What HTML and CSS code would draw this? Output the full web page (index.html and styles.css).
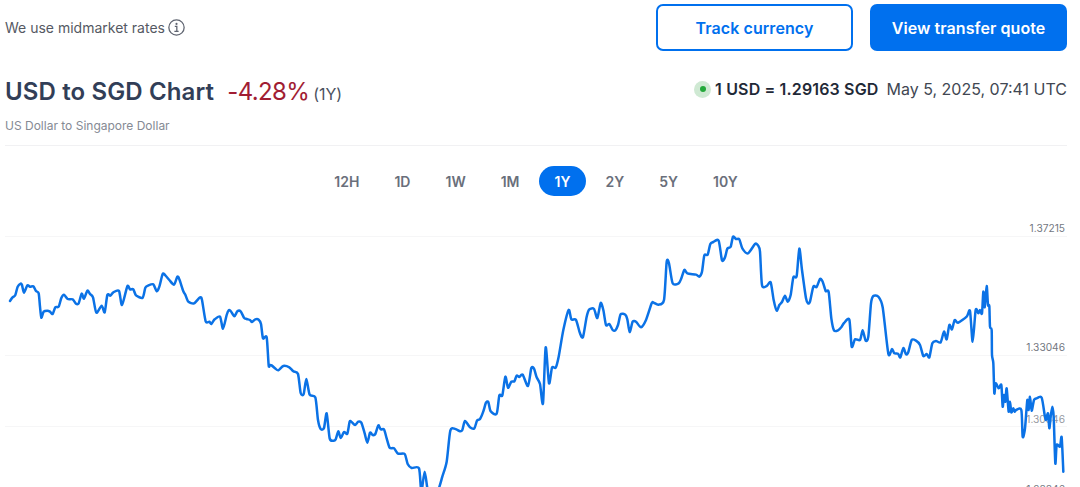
FILE: index.html
```html
<!DOCTYPE html>
<html lang="en">
<head>
<meta charset="utf-8">
<title>USD to SGD Chart</title>
<link rel="stylesheet" href="styles.css">
</head>
<body>
<main class="page">
  <div class="top">
    <div class="rates-note">
      <span>We use midmarket rates</span>
      <svg class="info" viewBox="0 0 16 16" width="17" height="17" aria-hidden="true">
        <circle cx="8" cy="8" r="7.2" fill="none" stroke="#5f6470" stroke-width="1.2"/>
        <path d="M6.4 6.9h1.9v4.6M6 11.6h4" fill="none" stroke="#5f6470" stroke-width="1.2"/>
        <circle cx="8" cy="4.6" r="1" fill="#5f6470"/>
      </svg>
    </div>
    <div class="actions">
      <a class="btn btn-outline">Track currency</a>
      <a class="btn btn-solid">View transfer quote</a>
    </div>
  </div>
  <header class="head">
    <div class="title-block">
      <div class="title-row">
        <h1>USD to SGD Chart</h1>
        <span class="change">-4.28%</span>
        <span class="period">(1Y)</span>
      </div>
      <p class="sub">US Dollar to Singapore Dollar</p>
    </div>
    <div class="rate">
      <span class="dot"></span>
      <strong>1 USD = 1.29163 SGD</strong>
      <span class="date">May 5, 2025, 07:41 UTC</span>
    </div>
  </header>
  <nav class="tabs">
    <a class="tab">12H</a>
    <a class="tab">1D</a>
    <a class="tab">1W</a>
    <a class="tab">1M</a>
    <a class="tab active">1Y</a>
    <a class="tab">2Y</a>
    <a class="tab">5Y</a>
    <a class="tab">10Y</a>
  </nav>
  <svg class="chart" viewBox="0 207 1080 290" width="1080" height="290" aria-label="USD to SGD chart">
    <g class="grid">
      <line x1="5" x2="1067" y1="236.5" y2="236.5"/>
      <line x1="5" x2="1067" y1="355.5" y2="355.5"/>
      <line x1="5" x2="1067" y1="426.5" y2="426.5"/>
    </g>
    <g class="axis">
      <text x="1065" y="231.5">1.37215</text>
      <text x="1065" y="350.5">1.33046</text>
      <text class="faded" x="1065" y="422.5">1.30846</text>
      <text x="1065" y="492.5">1.28846</text>
    </g>
    <path id="series" class="series" d=""/>
  </svg>
</main>
<script src="chart.js"></script>
</body>
</html>
```

FILE: styles.css
```css
* { box-sizing: border-box; }
html, body { margin: 0; height: 100%; overflow: hidden; background: #fff; }
body { font-family: Inter, "Liberation Sans", sans-serif; color: #2e3a52; }
.page { width: 1080px; height: 487px; overflow: hidden; }

.top { display: flex; justify-content: space-between; align-items: center; height: 47px; margin-top: 4px; padding: 0 13px 0 5px; }
.rates-note { display: flex; align-items: center; gap: 3.5px; font-size: 14px; color: #555963; margin-top: -1px; }
.info { display: block; margin-top: 1px; }
.actions { display: flex; gap: 17px; }
.btn { display: flex; align-items: center; justify-content: center; width: 197px; height: 47px; border-radius: 7px; font-size: 16px; font-weight: 600; letter-spacing: .07px; }
.btn-outline { border: 2px solid #0070ee; color: #0070ee; background: #fff; }
.btn-solid { background: #0070ee; color: #fff; }

.head { display: flex; justify-content: space-between; margin: 0 13px 0 5px; height: 95px; padding-top: 25px; border-bottom: 1px solid #f1f1f3; }
.title-row { display: flex; align-items: baseline; height: 32px; }
h1 { margin: 0; font-size: 24px; line-height: 32px; font-weight: 600; color: #323e57; letter-spacing: .13px; }
.change { margin-left: 13px; font-size: 24px; font-weight: 400; color: #a11d33; letter-spacing: -.6px; }
.period { margin-left: 4px; font-size: 16px; color: #4a5160; letter-spacing: -.1px; }
.sub { margin: 10px 0 0; font-size: 12px; line-height: 15px; color: #858a94; }

.rate { display: flex; align-items: center; height: 20px; margin-top: 3px; font-size: 16px; }
.rate strong { font-weight: 600; font-size: 16px; letter-spacing: .15px; color: #1f2937; margin-left: 4px; }
.date { margin-left: 8px; color: #414752; font-size: 16px; }
.dot { width: 17px; height: 17px; border-radius: 50%; background: #cfe9d3; display: flex; align-items: center; justify-content: center; }
.dot::before { content: ""; width: 6px; height: 6px; border-radius: 50%; background: #23a83a; }

.tabs { display: flex; justify-content: center; align-items: center; gap: 4px; height: 30px; margin: 20px 13px 0 5px; }
.tab { display: flex; align-items: center; justify-content: center; height: 30px; padding: 0 15.5px; font-size: 14px; font-weight: 600; color: #6a6f7b; }
.tab.active { border-radius: 15px; background: #0070ee; color: #fff; }

.chart { display: block; margin-top: 11px; }
.grid line { stroke: #f6f6f7; stroke-width: 1; }
.axis text { font-size: 10.2px; fill: #73777f; text-anchor: end; }
.axis .faded { opacity: .75; }
.series { fill: none; stroke: #0b72e6; stroke-width: 2.5; stroke-linejoin: round; stroke-linecap: round; }
```

FILE: chart.js
```js
// Traced series: each block is [x offset, flat list of x,y at 3x scale].
var blocks = [
  [0, [30,243,37,233,46,225,53,200,62,191,66,195,72,218,82,196,90,200,100,199,108,213,116,220,120,260,124,293,131,275,142,272,150,275,158,282,166,262,176,260,184,234,192,224,203,237,218,238,228,251,236,250,245,221,252,236,262,212,270,222,279,232,289,278,305,257,314,277,322,225,331,227,340,217,357,213,366,255,382,199,390,208,400,208,408,226,428,233,436,203,444,197,460,193,470,214,478,200,488,162,496,166,508,180,522,194,532,170,538,178,550,214,556,224,565,245,582,250,600,232,606,240,617,304,628,305,634,312,644,298,660,290,669,326,680,285,686,271,692,273,703,289,712,274,722,274,732,293,740,297,750,300,756,306,766,298,776,299,783,312,789,355,800,352,806,436]],
  [270, [0,435,5,436,15,445,25,451,40,438,58,442,70,454,84,462,92,519,101,522,109,477,119,524,136,532,144,600,152,627,162,624,170,580,179,655,190,662,197,658,205,634,212,654,222,636,232,641,239,605,245,606,255,615,265,605,274,608,284,640,292,668,300,638,308,645,316,642,325,616,332,628,342,628,350,655,359,683,372,685,384,701,404,702,413,732,425,744,447,745,454,815,464,755,474,815,490,840,505,810,517,770,530,725,541,632,556,627,570,634,577,630,585,603,600,622,613,625,621,602,630,597,640,574,648,548,655,546,662,574,680,581,688,526,697,526,706,470,714,503,724,485,733,484,740,467,748,471,758,464,774,498,784,444,792,446,800,472]],
  [540, [0,492,9,550,17,382,27,490,36,443,47,443,56,410,70,330,86,270,94,298,108,300,120,340,129,351,140,290,148,268,162,267,172,294,182,249,190,270,198,315,208,312,218,330,226,331,234,315,242,283,256,284,262,298,269,336,278,305,288,305,303,322,318,300,335,250,341,248,355,254,372,240,380,126,387,130,398,190,416,190,424,175,433,150,442,160,468,164,478,170,486,155,493,106,503,104,511,72,520,66,536,62,546,121,555,112,562,86,572,80,579,50,588,57,598,58,607,85,624,100,645,72,654,76,660,95,666,195,680,198,692,187,701,240,710,272,718,255,726,246,735,227,743,245,752,225,760,172,770,168,778,86,786,150,798,235,804,250]],
  [810, [0,245,10,200,20,201,30,177,38,185,47,213,56,216,64,295,72,331,84,331,95,320,102,309,118,299,125,380,135,358,150,360,158,331,167,362,175,350,183,250,190,228,205,230,218,262,235,401,246,387,253,400,264,401,271,412,280,384,288,403,295,396,305,360,318,362,330,375,340,408,350,402,358,412,367,370,378,363,392,367,402,335,410,358,418,315,426,328,434,300,444,308,470,290,480,273,488,365,497,270,505,280,510,270,516,280,520,215,524,262,530,198,534,255,538,258,540,320,545,330,546,405,550,430,553,520,557,490,566,505,574,495,578,560,582,525,586,545,590,505,596,575,600,545,604,577,610,565,614,575,618,570,634,570,638,650,645,625,652,540,656,570,660,530,665,572,672,540,680,535,695,533,704,585,708,600,714,580,718,625,722,590,727,560,731,590,736,730,740,675,750,680,755,652,760,755]]
];

var pts = [];
blocks.forEach(function (b) {
  for (var i = 0; i < b[1].length; i += 2) {
    pts.push([b[0] + b[1][i] / 3, 220 + b[1][i + 1] / 3]);
  }
});

// Smooth the trace with a Catmull-Rom spline.
var d = "M" + pts[0][0].toFixed(2) + " " + pts[0][1].toFixed(2);
for (var i = 0; i < pts.length - 1; i++) {
  var p0 = pts[Math.max(i - 1, 0)], p1 = pts[i], p2 = pts[i + 1], p3 = pts[Math.min(i + 2, pts.length - 1)];
  var k = 1 / 8;
  d += "C" + (p1[0] + (p2[0] - p0[0]) * k).toFixed(2) + " " + (p1[1] + (p2[1] - p0[1]) * k).toFixed(2) +
       " " + (p2[0] - (p3[0] - p1[0]) * k).toFixed(2) + " " + (p2[1] - (p3[1] - p1[1]) * k).toFixed(2) +
       " " + p2[0].toFixed(2) + " " + p2[1].toFixed(2);
}
document.getElementById("series").setAttribute("d", d);
```
